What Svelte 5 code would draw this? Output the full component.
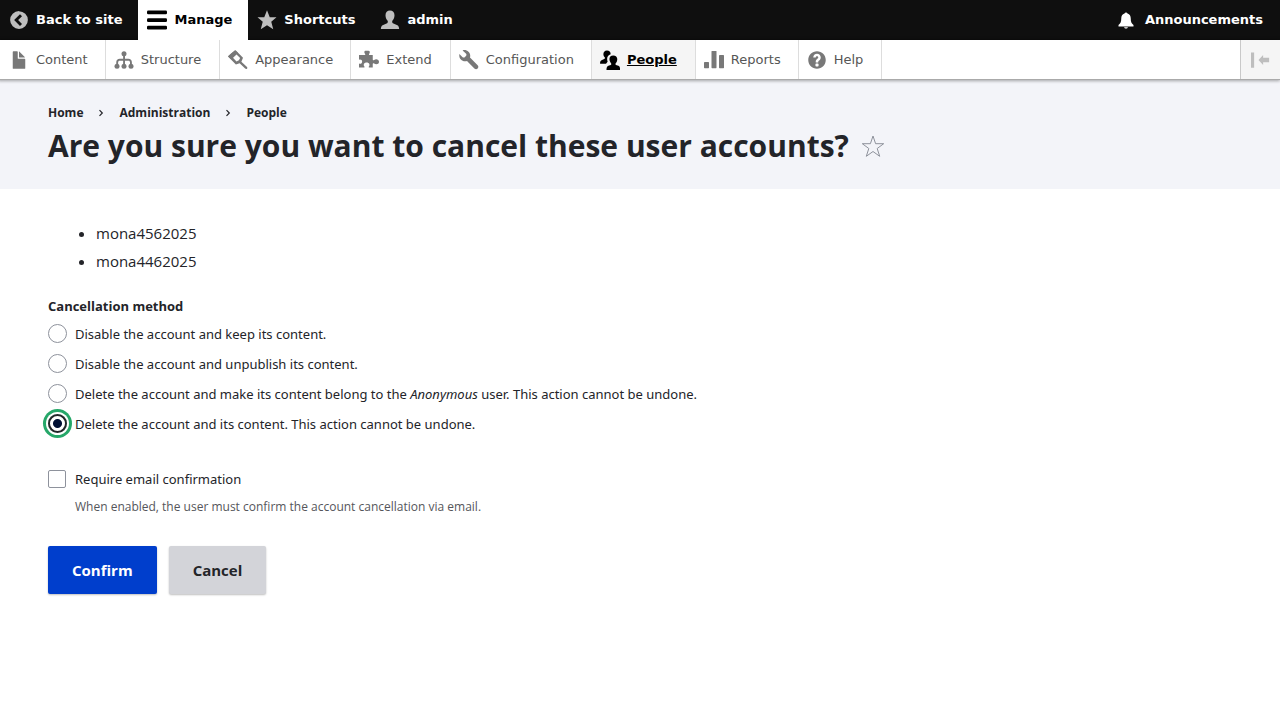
<script lang="ts">
  type Item = { label: string; icon: string; active?: boolean };

  const bar: Item[] = [
    { label: 'Back to site', icon: 'back' },
    { label: 'Manage', icon: 'menu', active: true },
    { label: 'Shortcuts', icon: 'star' },
    { label: 'admin', icon: 'person' },
  ];

  const tray: Item[] = [
    { label: 'Content', icon: 'file' },
    { label: 'Structure', icon: 'structure' },
    { label: 'Appearance', icon: 'brush' },
    { label: 'Extend', icon: 'puzzle' },
    { label: 'Configuration', icon: 'wrench' },
    { label: 'People', icon: 'people', active: true },
    { label: 'Reports', icon: 'chart' },
    { label: 'Help', icon: 'help' },
  ];

  const crumbs = ['Home', 'Administration', 'People'];
  const users = ['mona4562025', 'mona4462025'];
  const methods = [
    { value: 'block', before: 'Disable the account and keep its content.' },
    { value: 'unpublish', before: 'Disable the account and unpublish its content.' },
    {
      value: 'reassign',
      before: 'Delete the account and make its content belong to the ',
      em: 'Anonymous',
      after: ' user. This action cannot be undone.',
    },
    { value: 'delete', before: 'Delete the account and its content. This action cannot be undone.' },
  ];

  let method = $state('delete');
  let requireEmail = $state(false);
</script>

{#snippet glyph(name: string)}
  <svg class="icon" viewBox="0 0 16 16" width="20" height="20" fill="currentColor" aria-hidden="true">
    {#if name === 'back'}
      <path fill-rule="evenodd" d="M8 .9a7.1 7.1 0 1 0 0 14.2A7.1 7.1 0 0 0 8 .9zm2.4 10.2L8.8 12.7 4.1 8l4.7-4.7 1.6 1.6L7.3 8z" />
    {:else if name === 'menu'}
      <rect y=".4" width="16" height="3" rx="1" />
      <rect y="6.5" width="16" height="3" rx="1" />
      <rect y="12.6" width="16" height="3" rx="1" />
    {:else if name === 'star'}
      <path d="M8 .2l2.200 5.500h5.400l-4.200 3.700 1.600 6L8 12.200l-5 3.200 1.600-6L.400 5.700h5.400z" />
    {:else if name === 'person'}
      <path d="M8 .3c2.2 0 3.6 1.5 3.6 3.8 0 1.9-.8 3.6-1.7 4.5-.3.5-.2 1.5.4 1.9l3.6 1.6c.9.5 1.4 1.6 1.4 3H.7c0-1.4.5-2.5 1.4-3l3.6-1.6c.6-.4.7-1.4.4-1.9-.9-.9-1.7-2.6-1.7-4.5C4.400 1.800 5.800.3 8 .3z" />
    {:else if name === 'file'}
      <path d="M12.500 7h-5a.5.5 0 0 1-.5-.5v-5a.5.5 0 0 0-.5-.5h-3a.5.5 0 0 0-.5.5v13a.5.5 0 0 0 .5.5h9a.5.5 0 0 0 .5-.5v-7a.5.5 0 0 0-.5-.5zM8.500 6h4c.3 0 .3-.2.1-.4L8.400 1.400C8.200 1.200 8 1.200 8 1.500v4c0 .3.2.5.5.5z" />
    {:else if name === 'structure'}
      <circle cx="8" cy="2.900" r="2" />
      <path d="M7.300 4h1.500v3h2.700c1.700 0 2.800 1.100 2.800 2.800V12h-1.500V9.800c0-.8-.5-1.300-1.300-1.300H8.800V12H7.300V8.500H4.600c-.8 0-1.300.5-1.300 1.300V12H1.800V9.800C1.800 8.100 2.900 7 4.600 7h2.700z" />
      <circle cx="2.400" cy="13" r="2" />
      <circle cx="8" cy="13" r="2" />
      <circle cx="13.600" cy="13" r="2" />
    {:else if name === 'brush'}
      <path fill-rule="evenodd" d="M6 .2l.9.800L12 6.200l-1.300 3.200 4.300 4c.6.600.6 1.100.2 1.500s-1 .4-1.500-.1L9.300 10.600 6.300 11.500 0 5.100l2.500-2.300zM6.600 3.400L3.800 6l3 3.100 1.900-.9L9.700 6.300z" />
      <path d="M0 5L5.600.1l2.400 2.300L2.600 7.500z" />
    {:else if name === 'puzzle'}
      <path d="M0 4h4.500c.7 0 .6-.6.3-1-.8-.9-.6-2.500.2-2.500h2.500C8.800.5 9 2 8.200 3c-.4.500-.3 1 .4 1H11v3.500c0 .7.600.800 1.100.4 1.300-1.100 3.900-.7 3.900 1.500s-2.600 2.500-3.900 1.400c-.5-.4-1.100-.3-1.100.4V14H8.400c-.7 0-.8-.6-.4-1.100.9-1.200.2-3-1.900-3s-2.800 1.800-1.900 3c.4.500.3 1.100-.4 1.100H0v-3.200c1.500.5 2.500-.3 2.500-1.500S1.500 7.300 0 7.800z" />
    {:else if name === 'wrench'}
      <path d="M14.900 12.100L8.800 6c.9-3.200-1.500-6-4.600-6-.5 0-.9.100-1.300.3l2.600 2.400c.6.600.6 1.500 0 2.100l-.7.700c-.6.600-1.500.6-2.100 0L.300 3.100c-.6 3.400 1.600 6 4.700 5.900.5 0 1-.1 1.400-.2l5.900 5.900c.8.800 1.900.8 2.600.1s.8-1.900 0-2.700z" />
    {:else if name === 'people'}
      <path d="M5.600.4c2 0 3 1.200 2.900 3-2.400.6-3.400 3-2.400 6l-1.300 1.500H.1c-.2-1.600.4-2.600 1.500-3l1.800-.7c.8-.4.700-1.100.2-1.700C2.200 4.500 2.200.4 5.600.4z" />
      <path d="M10.600 4.300c2.100 0 3.300 1.300 3.200 3.200-.1 1.300-.5 2.300-1.200 3-.4.500-.4 1.100.2 1.400l1.900.7c1 .4 1.500 1.600 1.400 3.400H5.200c-.1-1.800.5-3 1.500-3.400l1.900-.7c.6-.3.600-.9.2-1.400-1.700-1.800-2.100-6.200 1.800-6.200z" />
    {:else if name === 'chart'}
      <rect y="9.500" width="4" height="5" rx=".5" />
      <rect x="6" y=".7" width="4" height="13.800" rx=".5" />
      <rect x="12" y="4" width="4" height="10.500" rx=".5" />
    {:else if name === 'help'}
      <path d="M8.002 1c-3.868 0-7.002 3.134-7.002 7s3.134 7 7.002 7c3.865 0 7-3.134 7-7s-3.135-7-7-7zm3 5c0 .551-.16 1.085-.477 1.586l-.158.22c-.07.093-.189.241-.361.393-.168.148-.35.299-.545.447l-.203.189-.141.129-.096.17-.021.235v.63h-2.001v-.704c.026-.396.078-.73.204-.999.125-.269.271-.498.439-.688l.225-.21.166-.155.137-.128c.186-.139.357-.277.516-.417l.148-.18c.098-.152.168-.323.168-.518 0-.552-.447-1-1-1s-1.002.448-1.002 1h-2c0-1.657 1.343-3 3.002-3 1.656 0 3 1.343 3 3zm-1.750 6.619c0 .344-.281.625-.625.625h-1.250c-.345 0-.626-.281-.626-.625v-1.238c0-.344.281-.625.626-.625h1.250c.344 0 .625.281.625.625v1.238z" />
    {:else if name === 'bell'}
      <path d="M8 1.900c.6 0 1 .3 1.200.8 1.800.5 2.600 2 2.600 4 0 2.700.6 4 2.200 5.200v1.300H2v-1.300c1.600-1.200 2.200-2.500 2.200-5.200 0-2 .8-3.500 2.600-4 .2-.5.6-.8 1.200-.8zM6.500 13.700h3c-.2.800-.8 1.100-1.500 1.100s-1.300-.3-1.500-1.100z" />
    {:else if name === 'collapse'}
      <path d="M0 1.900h2.500v12.200H0zM6 8l3.700-4v2.200H14.500v3.600H9.700V12z" />
    {/if}
  </svg>
{/snippet}

<div class="admin">
  <nav class="bar" aria-label="Toolbar items">
    {#each bar as item}
      <a href="#top" class="tab" class:active={item.active}>{@render glyph(item.icon)}<span>{item.label}</span></a>
    {/each}
    <a href="#announcements" class="tab announce">{@render glyph('bell')}<span>Announcements</span></a>
  </nav>
  <nav class="tray" aria-label="Administration menu">
    {#each tray as item}
      <a href="#top" class="link" class:current={item.active}>{@render glyph(item.icon)}<span>{item.label}</span></a>
    {/each}
    <button type="button" class="orient" aria-label="Vertical orientation">{@render glyph('collapse')}</button>
  </nav>
</div>

<header class="header">
  <nav aria-label="Breadcrumb">
    <ol class="crumbs">
      {#each crumbs as crumb, i}
        <li>
          {#if i > 0}
            <svg class="sep" viewBox="0 0 6 8" width="6" height="8" aria-hidden="true"><path d="M1.500 1.200l2.800 2.800-2.800 2.800" fill="none" stroke="currentColor" stroke-width="1.200" /></svg>
          {/if}
          <a href="#top">{crumb}</a>
        </li>
      {/each}
    </ol>
  </nav>
  <div class="title">
    <h1>Are you sure you want to cancel these user accounts?</h1>
    <button type="button" class="fav" aria-label="Add to Default shortcuts">
      <svg viewBox="0 0 24 24" width="24" height="24" fill="none" stroke="#8e929c" aria-hidden="true"><path d="M12 2l2.600 7.700h8.100l-6.500 4.800 2.500 7.800-6.700-4.800-6.700 4.800 2.500-7.800-6.500-4.800h8.100z" /></svg>
    </button>
  </div>
</header>

<main>
  <form onsubmit={(e) => e.preventDefault()}>
    <ul class="users">
      {#each users as user}<li>{user}</li>{/each}
    </ul>

    <fieldset>
      <legend>Cancellation method</legend>
      {#each methods as m}
        <label class="option">
          <input type="radio" name="method" value={m.value} bind:group={method} />
          <span>{m.before}{#if m.em}<em>{m.em}</em>{m.after}{/if}</span>
        </label>
      {/each}
    </fieldset>

    <label class="option">
      <input type="checkbox" bind:checked={requireEmail} aria-describedby="email-help" />
      <span>Require email confirmation</span>
    </label>
    <p class="help" id="email-help">When enabled, the user must confirm the account cancellation via email.</p>

    <div class="actions">
      <button type="submit" class="button primary">Confirm</button>
      <a href="#people" class="button">Cancel</a>
    </div>
  </form>
</main>

<style>
  :global(body) {
    background: #fff;
    color: #232429;
    font: 15px/24px 'Open Sans', 'Noto Sans', sans-serif;
  }

  a {
    color: inherit;
    text-decoration: none;
  }

  button {
    border: 0;
    font: inherit;
    cursor: pointer;
  }

  .icon {
    flex: none;
  }

  .admin {
    position: relative;
    font: 13px/16px 'DejaVu Sans', Verdana, sans-serif;
  }

  .bar,
  .tray {
    display: flex;
  }

  .bar {
    background: #0f0f0f;
    color: #fff;
    font-weight: 700;
  }

  .tab,
  .link {
    display: flex;
    align-items: center;
    gap: 7px;
    box-sizing: border-box;
    height: 40px;
    padding: 0 16px 0 9px;
  }

  .tab .icon {
    color: #bebebe;
  }

  .tab.active {
    background: #fff;
    color: #000;
  }

  .tab.active .icon {
    color: #000;
  }

  .tab.announce {
    margin-left: auto;
    padding-right: 17px;
    gap: 9px;
  }

  .announce .icon {
    color: #fff;
  }

  .tray {
    background: #fff;
    color: #565656;
    border-bottom: 1px solid #aaa;
    box-shadow: -1px 0 3px 1px rgba(0, 0, 0, 0.33);
  }

  .link {
    height: 39px;
    padding: 0 17px 0 8px;
    border-right: 1px solid #ddd;
  }

  .link:nth-child(even) {
    padding-right: 18px;
  }

  .link:first-child {
    padding-left: 9px;
  }

  .link .icon {
    color: #787878;
  }

  .link.current {
    background: #f5f5f5;
    color: #000;
    font-weight: 700;
    text-decoration: underline;
  }

  .link.current .icon {
    color: #000;
  }

  .orient {
    display: flex;
    align-items: center;
    justify-content: center;
    width: 40px;
    margin-left: auto;
    padding: 0;
    border-left: 1px solid #c9c9c9;
    background: #f5f5f5;
    color: #bebebe;
  }

  .header {
    padding: 24px 48px 21px;
    background: #f3f4f9;
  }

  .crumbs {
    display: flex;
    margin: 0;
    padding: 0;
    list-style: none;
    font-size: 12px;
    font-weight: 700;
    line-height: 18px;
  }

  .crumbs li {
    display: flex;
    align-items: center;
  }

  .sep {
    margin: 0 15px;
  }

  .title {
    display: flex;
    align-items: center;
    gap: 12px;
    margin-top: 2px;
  }

  h1 {
    margin: 0;
    font-size: 30px;
    font-weight: 700;
    line-height: 44px;
  }

  .fav {
    display: flex;
    padding: 0;
    background: none;
  }

  main {
    padding: 32px 48px;
  }

  .users {
    margin: 0 0 24px;
    padding-left: 48px;
  }

  .users li {
    margin-bottom: 4px;
  }

  fieldset {
    margin: 0 0 32px;
    padding: 0;
    border: 0;
  }

  legend {
    padding: 0;
    font-size: 13px;
    font-weight: 700;
    line-height: 18px;
  }

  .option {
    display: flex;
    align-items: center;
    gap: 8px;
    width: fit-content;
    font-family: 'Noto Sans', 'Open Sans', sans-serif;
    font-size: 13px;
    line-height: 22px;
  }

  .option span {
    padding-top: 1px;
  }

  fieldset .option {
    margin-top: 7px;
  }

  input {
    flex: none;
    box-sizing: border-box;
    appearance: none;
    width: 19px;
    height: 19px;
    margin: 0;
    border: 1px solid #8e929c;
    border-radius: 2px;
    background: #fff;
  }

  input[type='checkbox'] {
    width: 18px;
    height: 18px;
    margin-right: 1px;
  }

  input[type='radio'] {
    border-radius: 50%;
  }

  input[type='radio']:checked {
    border: 2px solid #232429;
    background: radial-gradient(circle, #000f33 4px, #fff 5px);
    box-shadow: 0 0 0 2px #fff, 0 0 0 5px #26a769;
  }

  input[type='checkbox']:checked {
    background: #003ecc;
  }

  .help {
    margin: 8px 0 0 27px;
    color: #55565b;
    font-size: 12px;
    line-height: 18px;
  }

  .actions {
    display: flex;
    gap: 12px;
    margin-top: 30px;
  }

  .button {
    padding: 12px 24px;
    border-radius: 2px;
    background: #d3d4d9;
    box-shadow: 0 1px 2px rgba(0, 0, 0, 0.25);
    color: #232429;
    font-weight: 700;
  }

  .primary {
    background: #003ecc;
    color: #fff;
  }
</style>
